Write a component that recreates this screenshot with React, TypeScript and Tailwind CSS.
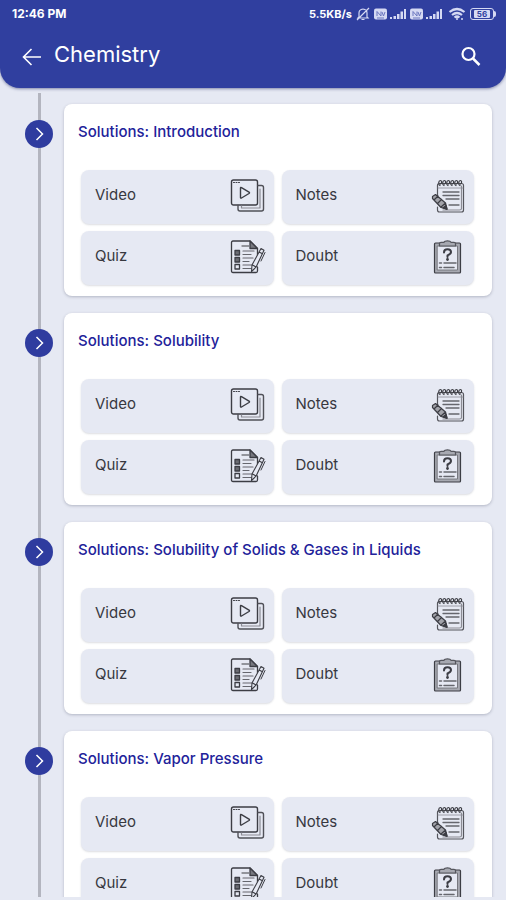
import React from "react";

const topics: string[] = [
  "Solutions: Introduction",
  "Solutions: Solubility",
  "Solutions: Solubility of Solids & Gases in Liquids",
  "Solutions: Vapor Pressure",
];

const iconProps = {
  viewBox: "0 0 36 36",
  fill: "none",
  stroke: "currentColor",
  strokeLinecap: "round" as const,
  strokeLinejoin: "round" as const,
  "aria-hidden": true,
  className: "size-9 shrink-0 text-[#3c3d44]",
};

function VideoIcon() {
  return (
    <svg {...iconProps} strokeWidth="1.4">
      <rect x="1.5" y="2" width="26" height="25" rx="2" />
      <path d="M3.5 4.500h1M6 4.500h1M8.500 4.500h1" strokeWidth="1" />
      <path d="M10.500 10v9.500q0 1 1 .5l7.500-4.500q1-.7 0-1.400l-7.500-4.500q-1-.5-1 .4z" />
      <path d="M28 7.500h3.500q2 0 2 2V31q0 2-2 2H10q-2 0-2-2v-3.500" stroke="#505158" />
      <path d="M30 11v19H11.500v-2" strokeWidth="1.200" stroke="#8b8c94" />
    </svg>
  );
}

function NotesIcon() {
  return (
    <svg {...iconProps} strokeWidth="1.200">
      <path d="M7.500 19V7.500q0-2 2-2h22q2 0 2 2V32q0 2-2 2h-22q-2 0-2-2v-3" stroke="#55565d" />
      <path d="M31.500 8v22.500q0 1.500-2 1.500H13" stroke="#8b8c94" strokeWidth="1.200" />
      <path d="M8 10h25" strokeWidth=".8" stroke="#8b8c94" />
      {[10, 14, 18, 22, 26, 30].map((x) => (
        <path key={x} d={`M${x} 7.500c-2-1-1.500-5 .3-5 1.700 0 1.700 2.500.3 3.500`} />
      ))}
      <path d="M13 14h16M13 17.500h16M16 21h13M19 27h10" stroke="#66676e" strokeWidth="1.300" />
      <path d="M2.500 18.500 5.500 16.500l10 8.500 1.500 6-6-1.500-8.500-9zM4.500 21.500l3.500-3.500M8 25l3.500-3.500M11 29l4.500-4" fill="#a2a3aa" />
      <path d="m13 30 4 1.500-1-4z" fill="currentColor" />
    </svg>
  );
}

function QuizIcon() {
  return (
    <svg {...iconProps} strokeWidth="1.300">
      <path d="M27.500 28v4q0 1.500-1.500 1.500H3q-1.500 0-1.500-1.500V3.500Q1.500 2 3 2h17l7.500 7.500V16" />
      <path d="M20 2v7.500h7.500z" fill="#77787f" />
      <path d="M12 7h7" stroke="#77787f" />
      <g fill="#6b6c73">
        <rect x="5" y="11.500" width="4.500" height="4.500" />
        <rect x="5" y="18.500" width="4.500" height="4.500" />
      </g>
      <rect x="5" y="25.500" width="4.500" height="4.500" />
      <path d="M13 12h11M13 15.500h8M13 19h10M13 22.500h6M13 26h9M13 29.500h11" strokeWidth="1.200" stroke="#66676e" />
      <path d="m31 9.500 3 1.700-8 17-4.500 4.300.5-6.500zM29 13l3.500 1.800M22.500 26l3.500 2" fill="#e6e9f3" strokeWidth="1.100" />
      <path d="M35 13.500 31 22" strokeWidth="1" />
    </svg>
  );
}

function DoubtIcon() {
  return (
    <svg {...iconProps} strokeWidth="1.200">
      <rect x="4.500" y="4" width="26" height="30" rx="1" fill="#a7a9b1" />
      <rect x="7.500" y="7" width="20" height="24" strokeWidth="1" fill="#e6e9f3" stroke="#77787f" />
      <path d="M9.500 7V4.500q0-1.200 1.500-1.200h3q.5-1.500 3.500-1.500t3.500 1.500h3q1.500 0 1.500 1.200V7z" fill="#a7a9b1" stroke="#55565d" />
      <path d="M14 13.500q0-3.200 3.500-3.200t3.500 2.800q0 2-3.500 3.300v1.600" strokeWidth="2" />
      <circle cx="17.500" cy="20.500" r=".8" fill="currentColor" />
      <path d="M9.500 24h2M14 24h12M9.500 28.500h2M14 28.500h10" strokeWidth="1.500" stroke="#66676e" />
    </svg>
  );
}

const actions = [
  { label: "Video", Icon: VideoIcon },
  { label: "Notes", Icon: NotesIcon },
  { label: "Quiz", Icon: QuizIcon },
  { label: "Doubt", Icon: DoubtIcon },
];

function Signal() {
  return (
    <span className="flex items-center gap-0.5">
      <svg viewBox="0 0 14 12" className="h-3 w-3.5" aria-hidden="true">
        <rect x="0" y=".5" width="13" height="11" rx="2" fill="#d5d9f3" />
        <path d="M3 8V3.500l4 4.500V3.500M8 4l1.500 4L11 4M3 10h7" fill="none" stroke="#6b76bf" />
      </svg>
      <svg viewBox="0 0 16 12" className="h-3 w-4" fill="#d5d9f3" aria-hidden="true">
        <path d="M0 9h2v2H0zM3.500 8h2.500v3h-2.500zM7 6h2.500v5H7zM10.500 3.500h2.500V11h-2.500zM14 1h2v10h-2z" />
      </svg>
    </span>
  );
}

function StatusBar() {
  return (
    <div className="flex h-7 items-center justify-between pr-2.5 pl-3 font-bold">
      <span className="text-xs">12:46 PM</span>
      <div className="flex items-center gap-1 text-[11px]">
        <span>5.5KB/s</span>
        <svg viewBox="0 0 14 14" className="size-3.5" fill="none" stroke="#d5d9f3" strokeWidth="1.200" aria-hidden="true">
          <path d="M3 10V6q0-3.500 4-4 4 .5 4 4v4l1 1H2zM5.500 12.500h3M1 13 13 1" />
        </svg>
        <Signal />
        <Signal />
        <svg viewBox="0 0 18 14" className="ml-0.5 h-3.5 w-[18px]" fill="none" stroke="#d5d9f3" strokeWidth="2.200" aria-hidden="true">
          <path d="M1.500 5q7.500-6 15 0M4 8q5-4 10 0M6.500 10.500q2.500-2 5 0" />
          <path d="M9 10v3M14 11v2" strokeWidth="1.500" />
        </svg>
        <span className="flex items-center">
          <span className="flex h-3 w-6 items-center justify-center rounded-[3px] border border-[#d5d9f3] p-px">
            <span className="flex h-2 w-4 items-center justify-center rounded-[1px] bg-[#d5d9f3] text-[8px] text-[#303f9f]">56</span>
          </span>
          <span className="h-1.5 w-0.5 rounded-r bg-[#d5d9f3]" />
        </span>
      </div>
    </div>
  );
}

function TopicCard({ title }: { title: string }) {
  return (
    <li className="flex items-start">
      <div className="flex w-16 shrink-0 pt-4 pl-[25px]">
        <button
          type="button"
          aria-label={`Open ${title}`}
          className="relative flex size-7 items-center justify-center rounded-full bg-[#2f3c9f] text-white"
        >
          <svg viewBox="0 0 28 28" className="size-7" fill="none" stroke="currentColor" strokeWidth="1.500" aria-hidden="true">
            <path d="m11.500 8 6 6-6 6" />
          </svg>
        </button>
      </div>
      <section className="min-w-0 flex-1 rounded-lg bg-white pt-4 pr-[18px] pb-[11px] pl-[17px] shadow-[0_1px_3px_rgba(60,64,90,0.3)]">
        <h2 className="-ml-[3px] text-[15px] leading-6 font-medium whitespace-nowrap text-[#22229a]">{title}</h2>
        <div className="mt-[26px] grid grid-cols-2 gap-x-2 gap-y-[7px]">
          {actions.map(({ label, Icon }) => (
            <button
              key={label}
              type="button"
              className="flex h-[54px] items-center justify-between rounded-lg bg-[#e6e9f3] pr-2 pb-0.5 pl-3.5 text-left text-[15px] leading-6 text-[#37383f] shadow-[0_1px_2px_rgba(60,64,90,0.18)]"
            >
              <span className="pb-0.5">{label}</span>
              <Icon />
            </button>
          ))}
        </div>
      </section>
    </li>
  );
}

export default function App() {
  return (
    <div className="flex h-screen flex-col overflow-hidden bg-[#e6e9f3] pb-[3px] font-['Inter','Noto_Sans',sans-serif]">
      <header className="z-10 shrink-0 rounded-b-[20px] bg-[#303f9f] pb-3 text-white shadow-[0_1px_3px_rgba(30,40,100,0.5)]">
        <StatusBar />
        <div className="flex h-12 items-center justify-between pt-2 pr-6 pl-[22px]">
          <div className="flex items-center gap-3">
            <button type="button" aria-label="Back">
              <svg viewBox="0 0 20 20" className="size-5" fill="none" stroke="currentColor" strokeWidth="1.600" aria-hidden="true">
                <path d="M19 11H2M9.500 3 1.500 11l8 8" />
              </svg>
            </button>
            <h1 className="pb-1 text-[22px] leading-7">Chemistry</h1>
          </div>
          <button type="button" aria-label="Search">
            <svg viewBox="0 0 22 22" className="size-[22px]" fill="none" stroke="currentColor" strokeWidth="2.200" aria-hidden="true">
              <circle cx="8.500" cy="9" r="6" />
              <path d="m13 13.500 6.500 6.500" strokeWidth="2.500" />
            </svg>
          </button>
        </div>
      </header>
      <main className="min-h-0 flex-1 overflow-y-auto [scrollbar-width:none]">
        <div className="relative pt-4 pb-4">
          <div className="absolute top-[5px] bottom-0 left-[38px] w-[3px] bg-[#b3b5bf]" />
          <ol className="flex flex-col gap-[17px] pr-3.5">
            {topics.map((title) => (
              <TopicCard key={title} title={title} />
            ))}
          </ol>
        </div>
      </main>
    </div>
  );
}
